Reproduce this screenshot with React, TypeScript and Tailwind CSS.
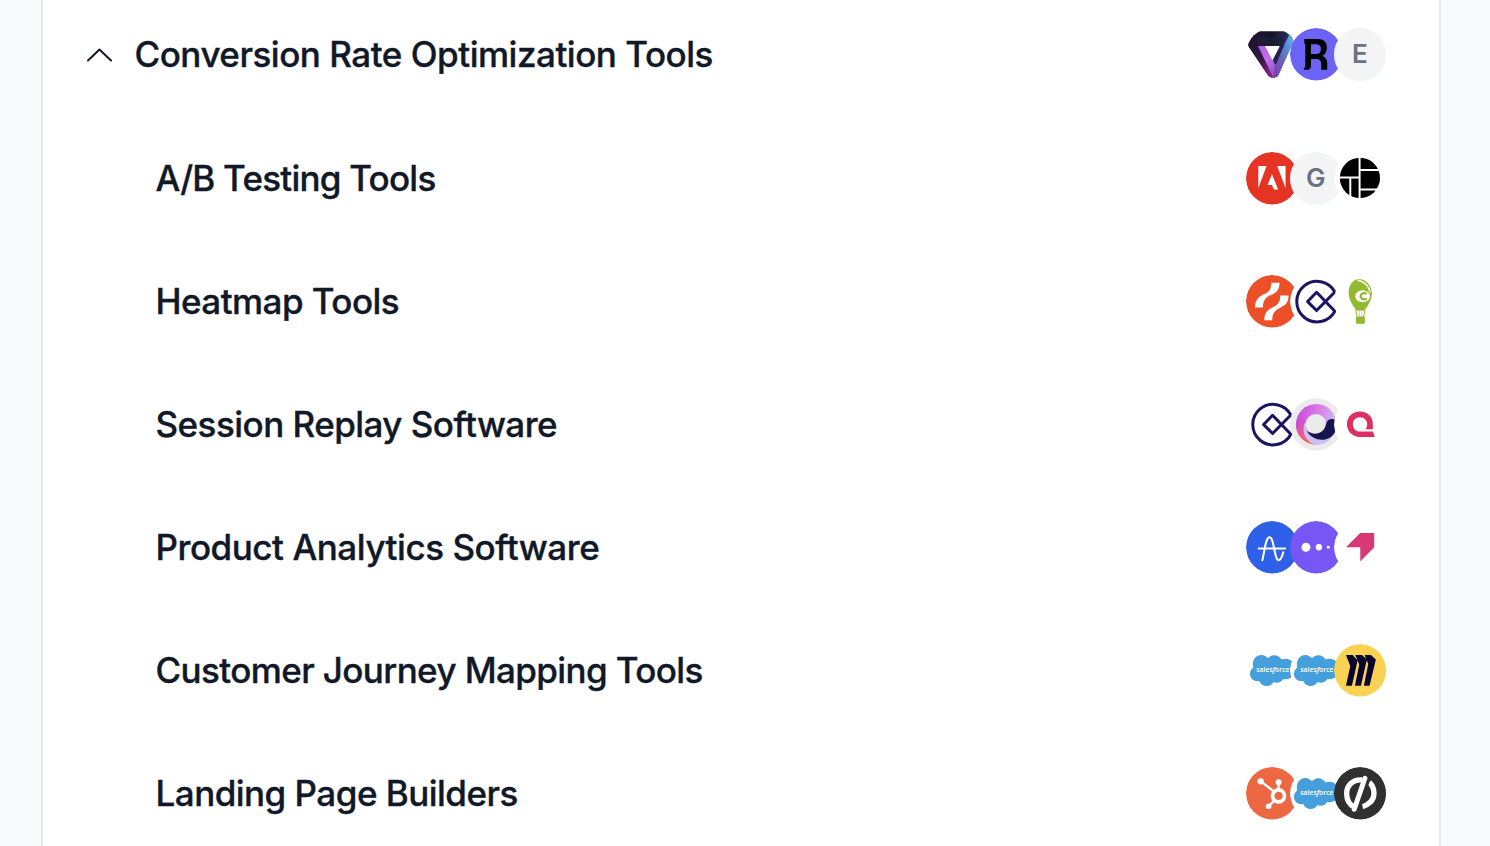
import type { ReactNode } from "react";

function Badge({ fill, children }: { fill: string; children?: ReactNode }) {
  return (
    <svg viewBox="0 0 158 158" className="-ml-[8.5px] block h-[52.5px] w-[52.5px] shrink-0 rounded-full first:ml-0">
      <circle cx="79" cy="79" r="79" fill={fill} />
      {children}
    </svg>
  );
}

function Letter({ children }: { children: string }) {
  return (
    <div className="-ml-[8.5px] flex h-[52.5px] w-[52.5px] shrink-0 items-center justify-center rounded-full bg-[#f3f4f6] pb-px text-[26px] font-semibold text-[#6b7280] first:ml-0">
      {children}
    </div>
  );
}

function Vwo() {
  return (
    <Badge fill="#fff">
      <defs>
        <linearGradient id="vTop" x1="0" y1="0" x2="1" y2="0">
          <stop offset="0" stopColor="#2b1230" />
          <stop offset="0.5" stopColor="#14122b" />
          <stop offset="1" stopColor="#2c3b66" />
        </linearGradient>
        <linearGradient id="vLeft" x1="0" y1="0" x2="0.6" y2="1">
          <stop offset="0" stopColor="#1c1530" />
          <stop offset="0.6" stopColor="#3b1745" />
          <stop offset="1" stopColor="#8a2080" />
        </linearGradient>
        <linearGradient id="vInner" x1="0" y1="0" x2="0.6" y2="1">
          <stop offset="0" stopColor="#a65cec" />
          <stop offset="0.5" stopColor="#c56ff0" />
          <stop offset="1" stopColor="#8c55c9" />
        </linearGradient>
        <linearGradient id="vRight" x1="1" y1="0" x2="0.2" y2="1">
          <stop offset="0" stopColor="#62b8ee" />
          <stop offset="0.4" stopColor="#5685cf" />
          <stop offset="1" stopColor="#7b3fa8" />
        </linearGradient>
      </defs>
      <path d="M41 10H119Q132 12 137 24L142 40L98 141Q95 149 84 149H76Q69 148 65 141L9 57Q5 51 8 43L20 20Q26 10 41 10Z" fill="url(#vTop)" />
      <path d="M6 49L36 54L88 149H76Q69 148 65 141L9 57Z" fill="url(#vLeft)" />
      <path d="M36 54H61L81 94L98 125L91 147L82 149Z" fill="url(#vInner)" />
      <path d="M131 19L144 40L97 142Q93 149 82 149L86 119L113 54Z" fill="url(#vRight)" />
      <path d="M99 54H114L88 112L80 94Z" fill="#29204f" />
      <path d="M57 54H102L80 97Z" fill="#fff" />
      <path d="M31 27H111L114 54H36Z" fill="#22203e" opacity="0.6" />
    </Badge>
  );
}

function Replo() {
  return (
    <Badge fill="#6a63f6">
      <path d="M43 33H84Q111 33 111 59Q111 77 97 84Q112 89 112 107V126H94V109Q94 93 79 93H63V114Q62 126 50 126H42V119H46V47H43ZM63 49V78H79Q93 78 93 63Q93 49 79 49Z" fill="#000" fillRule="evenodd" />
    </Badge>
  );
}

function Adobe() {
  return (
    <Badge fill="#e63424">
      <path d="M37 42H62L37 109ZM94 42H119V109ZM78 67L97 113H84L78 99H65Z" fill="#fff" />
    </Badge>
  );
}

function Mosaic() {
  return (
    <Badge fill="#fff">
      <circle cx="78" cy="78" r="60.5" fill="#000" />
      <path d="M77 15V141M16 77H75M77 54H140M77 113H136M49 77V139" stroke="#fff" strokeWidth="6" fill="none" />
    </Badge>
  );
}

function Hotjar() {
  return (
    <Badge fill="#ec5028">
      <path d="M76 23H101C101 44 92 53 75 60C60 66 51 76 51 98H27C27 77 37 65 54 58C68 52 76 44 76 23Z" fill="#fff" />
      <path d="M103 62H128C128 82 119 92 102 99C88 105 79 115 79 136H55C55 115 64 104 81 97C96 91 103 82 103 62Z" fill="#fff" />
    </Badge>
  );
}

function Clarity() {
  return (
    <Badge fill="#fff">
      <path d="M135 51A61 61 0 1 0 135 109L80 52L53 80L80 107L135 51" fill="none" stroke="#1b1464" strokeWidth="9" strokeLinejoin="round" />
    </Badge>
  );
}

function CrazyEgg() {
  return (
    <Badge fill="#fff">
      <path d="M76 12C99 14 114 35 114 56C114 77 99 97 91 107H68C56 93 44 74 44 53C44 31 57 12 76 12Z" fill="#93b92e" />
      <path d="M70 15C92 20 106 35 109 53" fill="none" stroke="#fff" strokeWidth="4" />
      <ellipse cx="86" cy="64" rx="22" ry="18" fill="#fff" />
      <path d="M98 57A11 9 0 1 0 98 71" fill="none" stroke="#93b92e" strokeWidth="7" />
      <path d="M65 104L70 127M93 104L89 127" fill="none" stroke="#93b92e" strokeWidth="3" />
      <path d="M76 105L77 127M84 105L83 127" fill="none" stroke="#93b92e" strokeWidth="1.5" />
      <rect x="66" y="125" width="27" height="22" rx="4" fill="#93b92e" />
    </Badge>
  );
}

function Orb() {
  return (
    <Badge fill="#ebebeb">
      <defs>
        <linearGradient id="orb" x1="0" y1="0.2" x2="1" y2="0.5">
          <stop offset="0" stopColor="#c948dc" />
          <stop offset="0.5" stopColor="#d87be5" />
          <stop offset="1" stopColor="#c9c3f5" />
        </linearGradient>
        <linearGradient id="orbWarm" x1="0.2" y1="0" x2="0.7" y2="1">
          <stop offset="0" stopColor="#c84de0" />
          <stop offset="0.55" stopColor="#ed5a8c" />
          <stop offset="1" stopColor="#f4652c" />
        </linearGradient>
      </defs>
      <circle cx="79" cy="79" r="61" fill="url(#orb)" />
      <path d="M18 73A61 61 0 0 0 73 140L60 110L47 70C35 60 26 60 18 73Z" fill="url(#orbWarm)" />
      <path d="M45 72C33 99 46 131 73 140C106 144 131 119 138 93L108 86C105 108 62 117 45 72Z" fill="#c9bff2" />
      <circle cx="78" cy="79" r="31" fill="#ebebeb" />
      <path d="M50 98C73 116 103 107 108 80C112 62 128 59 140 69V90C132 131 74 141 50 98Z" fill="#17144f" />
    </Badge>
  );
}

function Quantum() {
  return (
    <Badge fill="#fff">
      <path d="M78 101C64 101 57 91 57 79C57 67 65 58 78 58C91 58 100 67 100 79Q100 87 95 94H117V79C117 56 101 41 78 41C56 41 39 56 39 79C39 101 56 117 78 117H123L117 101Z" fill="#dc3063" />
    </Badge>
  );
}

function Amplitude() {
  return (
    <Badge fill="#2f61e8">
      <path d="M38 83H118M49 118C55 100 58 49 71 49C85 49 85 118 98 118C105 118 109 106 112 94" fill="none" stroke="#fff" strokeWidth="6" strokeLinecap="round" />
    </Badge>
  );
}

function Mixpanel() {
  return (
    <Badge fill="#7657f5">
      <g fill="#fff">
        <circle cx="48" cy="79" r="13.5" />
        <circle cx="87" cy="79" r="9.5" />
        <circle cx="115" cy="79" r="4.5" />
      </g>
    </Badge>
  );
}

function Pendo() {
  return (
    <Badge fill="#fff">
      <path d="M36 79L79 36H121V79L79 122V79Z" fill="#d93877" />
    </Badge>
  );
}

function Salesforce() {
  return (
    <Badge fill="#fff">
      <path d="M66 43C79 28 100 33 107 47C125 39 148 51 148 75C148 98 129 109 112 105C106 116 93 119 83 114C74 131 47 131 40 111C24 114 12 104 12 90C12 82 16 75 22 71C16 51 29 33 46 33C54 33 61 37 66 43Z" fill="#459fdc" />
      <text x="81" y="84" textAnchor="middle" textLength="100" lengthAdjust="spacingAndGlyphs" className="font-['Open_Sans',sans-serif] text-[23px] font-semibold" fill="#fff">
        sales<tspan fontStyle="italic">f</tspan>orce
      </text>
    </Badge>
  );
}

function Miro() {
  return (
    <Badge fill="#f9d254">
      <path d="M36 33H56L71 50L54 126H36L49 66ZM64 33H84L99 47L81 126H63L76 62ZM92 33H111L126 47L107 126H90L103 60Z" fill="#09032f" />
    </Badge>
  );
}

function Hubspot() {
  return (
    <Badge fill="#ee6743">
      <g stroke="#fff" fill="none" strokeLinecap="round">
        <circle cx="98" cy="87" r="18" strokeWidth="11" />
        <path d="M44 43L83 73M98 46V66M69 118L84 102" strokeWidth="7" />
      </g>
      <g fill="#fff">
        <circle cx="44" cy="43" r="9.5" />
        <circle cx="98" cy="46" r="9" />
        <circle cx="68" cy="118" r="8.5" />
      </g>
    </Badge>
  );
}

function Unbounce() {
  return (
    <Badge fill="#303030">
      <path d="M84 39C56 37 38 56 38 80C38 101 48 115 63 122" fill="none" stroke="#fff" strokeWidth="16" />
      <path d="M106 46C124 63 125 91 109 106C103 112 96 117 86 119" fill="none" stroke="#fff" strokeWidth="16" />
      <path d="M93 34L61 127" stroke="#fff" strokeWidth="15" strokeLinecap="round" />
      <path d="M109 28L73 130" stroke="#303030" strokeWidth="7" />
    </Badge>
  );
}

const categories: { name: string; tracking: string; logos: ReactNode }[] = [
  { name: "A/B Testing Tools", tracking: "tracking-[-0.77px]", logos: <><Adobe /><Letter>G</Letter><Mosaic /></> },
  { name: "Heatmap Tools", tracking: "tracking-[-0.55px]", logos: <><Hotjar /><Clarity /><CrazyEgg /></> },
  { name: "Session Replay Software", tracking: "tracking-[-0.53px]", logos: <><Clarity /><Orb /><Quantum /></> },
  { name: "Product Analytics Software", tracking: "tracking-[-0.46px]", logos: <><Amplitude /><Mixpanel /><Pendo /></> },
  { name: "Customer Journey Mapping Tools", tracking: "tracking-[-0.61px]", logos: <><Salesforce /><Salesforce /><Miro /></> },
  { name: "Landing Page Builders", tracking: "tracking-[-0.52px]", logos: <><Hubspot /><Salesforce /><Unbounce /></> },
];

export default function App() {
  return (
    <div className="flex h-[846px] justify-center overflow-hidden bg-[#f9fafb] pr-2 font-[Inter,sans-serif] text-[#111827]">
      <main className="w-[1400px] border-x-2 border-[#e5e7eb] bg-white pr-[53px] pl-11">
        <div className="flex h-[116.8px] items-start justify-between pt-7">
          <div className="flex h-[53px] items-center">
            <svg viewBox="0 0 26 14" className="mr-[21.5px] h-[14px] w-[26px]" fill="none" stroke="currentColor" strokeWidth="2" strokeLinecap="round" strokeLinejoin="round">
              <path d="M1 12.5L12.5 1.5L24 12.5" />
            </svg>
            <h2 className="pb-[2px] text-[35px] leading-[52px] font-medium tracking-[-0.48px] whitespace-nowrap [-webkit-text-stroke:0.35px]">Conversion Rate Optimization Tools</h2>
          </div>
          <div className="flex"><Vwo /><Replo /><Letter>E</Letter></div>
        </div>
        <ul>
          {categories.map(({ name, tracking, logos }) => (
            <li key={name} className="flex h-[123px] items-center justify-between pl-[68.5px]">
              <span className={`text-[35px] leading-[52px] font-medium whitespace-nowrap [-webkit-text-stroke:0.35px] ${tracking}`}>{name}</span>
              <div className="flex">{logos}</div>
            </li>
          ))}
        </ul>
      </main>
    </div>
  );
}
